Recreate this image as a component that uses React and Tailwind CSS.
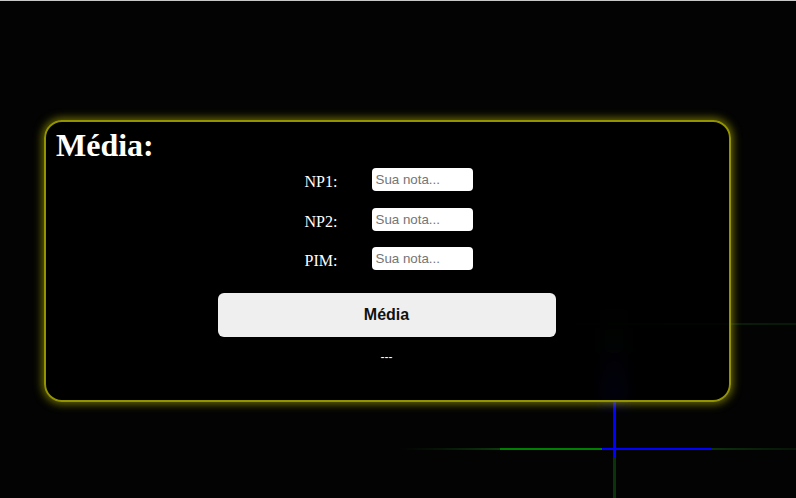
import React from "react";

// Background lines drawn behind the card
const Lines = () => (
  <svg className="absolute inset-0" width="796" height="498" viewBox="0 0 796 498">
    <defs>
      <linearGradient id="fadeLeft" x1="0" x2="1" y1="0" y2="0">
        <stop offset="0" stopColor="#0b2a0b" stopOpacity="0" />
        <stop offset="1" stopColor="#0d3a0d" />
      </linearGradient>
      <linearGradient id="fadeRight" x1="0" x2="1" y1="0" y2="0">
        <stop offset="0" stopColor="#0d330d" />
        <stop offset="1" stopColor="#0a200a" stopOpacity="0.6" />
      </linearGradient>
      <linearGradient id="glowUp" x1="0" x2="0" y1="0" y2="1">
        <stop offset="0" stopColor="#0a1a0a" stopOpacity="0" />
        <stop offset="0.35" stopColor="#061406" />
        <stop offset="1" stopColor="#0a0a60" />
      </linearGradient>
      <linearGradient id="faintGreen" x1="0" x2="1" y1="0" y2="0">
        <stop offset="0" stopColor="#0a1c0a" stopOpacity="0" />
        <stop offset="0.5" stopColor="#0a1e0a" />
        <stop offset="1" stopColor="#081808" />
      </linearGradient>
      <filter id="blur" x="-50%" y="-50%" width="200%" height="200%">
        <feGaussianBlur stdDeviation="7" />
      </filter>
    </defs>

    {/* faint upper glow */}
    <rect x="600" y="300" width="28" height="102" fill="url(#glowUp)" filter="url(#blur)" />
    <rect x="560" y="322" width="236" height="2" fill="url(#faintGreen)" />

    {/* horizontal line */}
    <rect x="400" y="447" width="100" height="2" fill="url(#fadeLeft)" />
    <rect x="500" y="447" width="102" height="2" fill="#008000" />
    <rect x="602" y="447" width="110" height="2" fill="#0000ff" />
    <rect x="712" y="447" width="84" height="2" fill="url(#fadeRight)" />

    {/* vertical line */}
    <rect x="613" y="400" width="3" height="57" fill="#0000ff" />
    <rect x="613" y="457" width="3" height="41" fill="#0a330a" />
  </svg>
);

const Row = ({ label }) => (
  <div className="flex h-[23px] items-start">
    <label className="w-[67px] pt-[5px] text-[16px] leading-[18px] text-white font-['Liberation_Serif',serif]">
      {label}
    </label>
    <input
      type="text"
      placeholder="Sua nota..."
      className="h-[23px] w-[101px] rounded-[4px] bg-white px-[4px] text-[13.33px] text-black outline-none placeholder:text-[#757575] font-['Liberation_Sans',Arial,sans-serif]"
    />
  </div>
);

export default function App() {
  return (
    <div className="relative h-[498px] overflow-hidden border-t border-[#c8c8c8] bg-[#030303]">
      <Lines />

      <div className="relative pl-[44px] pt-[119px]">
        <div className="flex h-[282px] w-[687px] flex-col rounded-[18px] border-2 border-[#939300] bg-black/85 pl-[10px] pt-[5px] shadow-[0_0_9px_2px_rgba(150,150,0,0.7)]">
          <h1 className="text-[32px] font-bold leading-[37px] text-white font-['Liberation_Serif',serif]">
            Média:
          </h1>

          <div className="mt-[4px] flex flex-col items-center gap-[16.5px] pl-[2px] pr-[10px]">
            <Row label="NP1:" />
            <Row label="NP2:" />
            <Row label="PIM:" />
          </div>

          <div className="flex flex-col items-center pr-[12px]">
            <button className="mt-[23px] h-[44px] w-[338px] rounded-[6px] bg-[#efefef] text-[16px] font-bold text-[#111] font-['Liberation_Sans',Arial,sans-serif]">
              Média
            </button>
            <p className="mt-[13px] text-[12px] leading-[14px] text-white font-['Liberation_Sans',Arial,sans-serif]">
              ---
            </p>
          </div>
        </div>
      </div>
    </div>
  );
}
